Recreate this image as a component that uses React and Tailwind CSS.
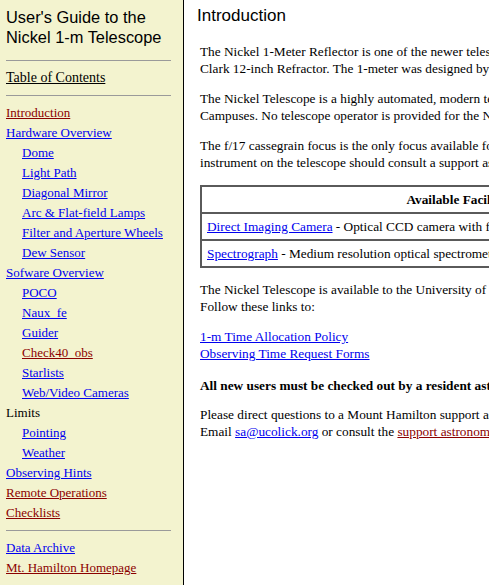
import React from "react";

const serif = { fontFamily: '"Liberation Serif", "Times New Roman", serif' };

const blue = "text-[#0000ee] underline";
const red = "text-[#8b0000] underline";

const nav = [
  { t: "Introduction", c: red },
  { t: "Hardware Overview", c: blue },
  { t: "Dome", c: blue, sub: true },
  { t: "Light Path", c: blue, sub: true },
  { t: "Diagonal Mirror", c: blue, sub: true },
  { t: "Arc & Flat-field Lamps", c: blue, sub: true },
  { t: "Filter and Aperture Wheels", c: blue, sub: true },
  { t: "Dew Sensor", c: blue, sub: true },
  { t: "Sofware Overview", c: blue },
  { t: "POCO", c: blue, sub: true },
  { t: "Naux_fe", c: blue, sub: true },
  { t: "Guider", c: blue, sub: true },
  { t: "Check40_obs", c: red, sub: true },
  { t: "Starlists", c: blue, sub: true },
  { t: "Web/Video Cameras", c: blue, sub: true },
  { t: "Limits", c: "text-black" },
  { t: "Pointing", c: blue, sub: true },
  { t: "Weather", c: blue, sub: true },
  { t: "Observing Hints", c: blue },
  { t: "Remote Operations", c: red },
  { t: "Checklists", c: red },
];

function Rule() {
  return <div className="h-px bg-[#9a9a9a] my-[7px]" />;
}

function Sidebar() {
  return (
    <aside className="w-[184px] shrink-0 h-full bg-[#f3f3cf] border-r border-black pl-[6px] pr-[12px] pt-[7px]">
      <h1
        className="text-[16.4px] leading-[20px] text-black font-normal"
        style={{ fontFamily: '"Liberation Sans", Arial, sans-serif' }}
      >
        User's Guide to the
        <br />
        Nickel 1-m Telescope
      </h1>
      <div className="mt-[13px]" />
      <Rule />
      <div style={serif} className="text-[14px] leading-[20px]">
        <a className="text-black underline">Table of Contents</a>
      </div>
      <Rule />
      <ul style={serif} className="text-[13px] leading-[20px]">
        {nav.map((n) => (
          <li key={n.t} className={n.sub ? "pl-[16px]" : ""}>
            <a className={n.c}>{n.t}</a>
          </li>
        ))}
      </ul>
      <Rule />
      <ul style={serif} className="text-[13px] leading-[20px]">
        <li>
          <a className={blue}>Data Archive</a>
        </li>
        <li>
          <a className={red}>Mt. Hamilton Homepage</a>
        </li>
      </ul>
    </aside>
  );
}

function Para({ lines, className = "" }) {
  return (
    <p className={"whitespace-nowrap " + className}>
      {lines.map((l, i) => (
        <span key={i} className="block">
          {l}
        </span>
      ))}
    </p>
  );
}

function Main() {
  return (
    <main className="shrink-0 w-[640px] bg-white text-black pt-[5px]">
      <h2
        className="pl-[13px] text-[17px] leading-[21px] font-normal"
        style={{ fontFamily: '"Liberation Sans", Arial, sans-serif' }}
      >
        Introduction
      </h2>
      <div style={serif} className="pl-[16px] text-[13.3px] leading-[17px] pt-[17px]">
        <Para
          lines={[
            "The Nickel 1-Meter Reflector is one of the newer telescopes on Mount Hamilton, second in age only to the",
            "Clark 12-inch Refractor. The 1-meter was designed by Lick staff and saw first light in 1979.",
          ]}
        />
        <Para
          className="mt-[13px]"
          lines={[
            "The Nickel Telescope is a highly automated, modern telescope available to astronomers from all UC",
            "Campuses. No telescope operator is provided for the Nickel; observers run the telescope themselves.",
          ]}
        />
        <Para
          className="mt-[13px]"
          lines={[
            "The f/17 cassegrain focus is the only focus available for instruments. Anyone wishing to mount a visiting",
            "instrument on the telescope should consult a support astronomer well in advance.",
          ]}
        />
        <table className="mt-[14px] w-[520px] border-2 border-[#5a5a5a] border-collapse">
          <tbody>
            <tr className="h-[27px]">
              <th className="border-2 border-[#5a5a5a] font-bold text-center">Available Facilities</th>
            </tr>
            <tr className="h-[27px]">
              <td className="border-2 border-[#5a5a5a] px-[5px] whitespace-nowrap">
                <a className={blue}>Direct Imaging Camera</a> - Optical CCD camera with filter wheels
              </td>
            </tr>
            <tr className="h-[27px]">
              <td className="border-2 border-[#5a5a5a] px-[5px] whitespace-nowrap">
                <a className={blue}>Spectrograph</a> - Medium resolution optical spectrometer (Kast)
              </td>
            </tr>
          </tbody>
        </table>
        <Para
          className="mt-[13px]"
          lines={[
            "The Nickel Telescope is available to the University of California community through the TAC process.",
            "Follow these links to:",
          ]}
        />
        <p className="mt-[13px]">
          <a className={blue + " block w-fit"}>1-m Time Allocation Policy</a>
          <a className={blue + " block w-fit"}>Observing Time Request Forms</a>
        </p>
        <p className="mt-[15px] font-bold whitespace-nowrap">
          All new users must be checked out by a resident astronomer before observing.
        </p>
        <p className="mt-[12px] whitespace-nowrap">
          <span className="block">Please direct questions to a Mount Hamilton support astronomer.</span>
          <span className="block">
            Email <a className={blue}>sa@ucolick.org</a> or consult the{" "}
            <a className={red}>support astronomer schedule</a>.
          </span>
        </p>
      </div>
    </main>
  );
}

export default function App() {
  return (
    <div className="w-[489px] h-[585px] overflow-hidden flex bg-white">
      <Sidebar />
      <Main />
    </div>
  );
}
